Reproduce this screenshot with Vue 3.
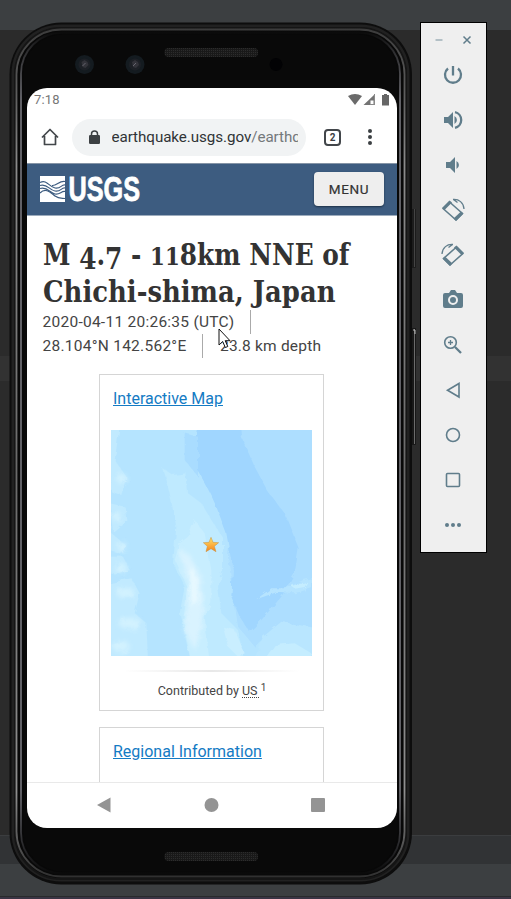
<script setup>
const tools = ['power', 'loud', 'quiet', 'rotl', 'rotr', 'camera', 'zoom', 'back', 'home', 'square', 'more']
</script>

<template>
  <div class="desktop">
    <main class="phone">
      <svg class="frame" width="412" height="864" viewBox="0 0 412 864">
        <defs>
          <linearGradient id="edge" x1="0" y1="0" x2="0" y2="1">
            <stop offset="0" stop-color="#3c3c3c" /><stop offset=".08" stop-color="#606060" />
            <stop offset=".16" stop-color="#8b8b8b" /><stop offset=".52" stop-color="#6a6a6a" />
            <stop offset=".9" stop-color="#8f8f8f" /><stop offset="1" stop-color="#303030" />
          </linearGradient>
          <linearGradient id="edge2" x1="0" y1="0" x2="0" y2="1">
            <stop offset="0" stop-color="#0b0b0b" /><stop offset=".02" stop-color="#2a2a2c" />
            <stop offset=".08" stop-color="#6a6a70" /><stop offset=".9" stop-color="#6a6a70" />
            <stop offset=".98" stop-color="#1c1c1e" /><stop offset="1" stop-color="#0a0a0a" />
          </linearGradient>
          <pattern id="mesh" width="2" height="2" patternUnits="userSpaceOnUse">
            <rect width="2" height="2" fill="#191919" /><rect width="1" height="1" fill="#2c2c2c" />
          </pattern>
        </defs>
        <rect x="401" y="187" width="6" height="59" rx="1" fill="#1c1c1c" />
        <path d="M405.5 187v58" stroke="#444" />
        <rect x="401" y="306" width="6" height="117" rx="1" fill="#181818" />
        <path d="M405.5 307v115" stroke="#6b6b6b" />
        <path d="M404 308h2v4" stroke="#bbb" fill="none" />
        <rect x=".5" y=".5" width="402.5" height="862" rx="52" fill="#0d0d0d" />
        <rect x="4" y="4" width="395" height="854" rx="48" fill="none" stroke="#212121" stroke-width="3" />
        <rect x="6" y="6" width="391" height="851" rx="46" fill="#080808" stroke="#151515" stroke-width="2" />
        <rect x="7.5" y="7.5" width="388" height="847" rx="45" fill="none" stroke="url(#edge)" stroke-width="1.8" />
        <rect x="12" y="10.5" width="379" height="841" rx="41" fill="#080808" stroke="url(#edge2)" stroke-width="1.8" />
        <rect x="14.5" y="12.5" width="374" height="837" rx="39" fill="#090909" />
        <g v-for="x in [75.5, 126]" :key="x">
          <circle :cx="x" cy="42.5" r="9.5" fill="#141b20" />
          <circle :cx="x" cy="42.5" r="6" fill="#1d2026" />
          <path :d="`M${x - 3} 40l3-2 3 2 1 3-3 3-3-1z`" fill="#33333a" />
          <path :d="`M${x - 2} 44l3-3`" stroke="#66656f" />
        </g>
        <circle cx="267" cy="42.5" r="6.5" fill="#020204" />
        <rect x="155.5" y="26" width="93.5" height="9" rx="4" fill="url(#mesh)" />
        <rect x="155.5" y="830" width="93.5" height="9" rx="4" fill="url(#mesh)" />
      </svg>

      <div class="screen">
        <div class="status">
          <span>7:18</span>
          <svg width="43" height="14" viewBox="0 0 43 14">
            <path d="M0 3Q7 -1 14 3L7 12z" fill="#6a6a6a" />
            <path d="M27 1v11H15.5z" fill="#737373" /><path d="M22.5 7.5h3V11h-3z" fill="#fff" /><path d="M26.5 1v11M22 11.5h5" stroke="#8a8a8a" />
            <path d="M34 2h2V1h3v1h2v10.5h-7z" fill="#666" />
          </svg>
        </div>
        <div class="browser">
          <svg class="home" width="18" height="18" viewBox="0 0 18 18"><path d="M1 9.5L9 1.5l8 8M3.5 8v8.5h11V8" fill="none" stroke="#42464a" stroke-width="1.7" stroke-linejoin="round" /></svg>
          <div class="url">
            <svg width="11" height="14" viewBox="0 0 11 14"><rect y="5" width="11" height="9" rx="1.2" fill="#3c4043" /><path d="M2.5 5.5V4a3 3 0 016 0v1.5" fill="none" stroke="#3c4043" stroke-width="1.5" /></svg>
            <span>earthquake.usgs.gov<i>/earthq</i></span>
          </div>
          <div class="tabs">2</div>
          <svg class="dots" width="6" height="16" viewBox="0 0 6 16" fill="#3c4043"><circle cx="3" cy="2" r="2" /><circle cx="3" cy="8" r="2" /><circle cx="3" cy="14" r="2" /></svg>
        </div>
        <header>
          <svg class="brand" width="101" height="28" viewBox="0 0 101 28">
            <rect y="1" width="25" height="26" fill="#fff" />
            <g fill="none" stroke="#3d5c80" stroke-width="1.2">
              <path d="M0 7.5C7 4 9 12 15 13S21 9.5 25 10" />
              <path d="M0 10.5C7 8 9 15 15 16S21 12.5 25 13" />
              <path d="M0 13.5C7 11 10 18 15 19S21 16 25 16.5" />
              <path d="M12 10.5C17 11 19 5.5 25 6.5" />
              <path d="M0 18C6 12 11 18 15 21S22 23 25 23.5" />
            </g>
            <text x="28.5" y="26" textLength="71.5" lengthAdjust="spacingAndGlyphs" class="logo">USGS</text>
          </svg>
          <button>MENU</button>
        </header>
        <section class="content">
          <h1>
            <svg width="320" height="71" viewBox="0 0 320 71">
              <text x="0" y="25" textLength="306.5" lengthAdjust="spacingAndGlyphs">M <tspan dy="3.5">4</tspan><tspan dy="-3.5">.</tspan><tspan dy="3.5">7</tspan><tspan dy="-3.5"> - </tspan><tspan class="low">11</tspan>8km NNE of</text>
              <text x="0" y="62" textLength="292.5" lengthAdjust="spacingAndGlyphs">Chichi-shima, Japan</text>
            </svg>
          </h1>
          <div class="facts"><span class="time">2020-04-11 20:26:35 (UTC)</span><b></b></div>
          <div class="facts second"><span class="place">28.104°N 142.562°E</span><b></b><span class="depth">23.8 km depth</span></div>
          <article class="card first">
            <a class="a1">Interactive Map</a>
            <svg class="map" width="201" height="226" viewBox="49 180 603 678">
              <defs>
                <filter id="soft"><feTurbulence type="fractalNoise" baseFrequency=".045" numOctaves="3" seed="4" /><feDisplacementMap in="SourceGraphic" scale="16" /><feGaussianBlur stdDeviation="2" /></filter>
                <filter id="haze"><feGaussianBlur stdDeviation="6" /></filter>
                <linearGradient id="gold" x1="0" y1="0" x2="0" y2="1"><stop stop-color="#ffe56a" /><stop offset="1" stop-color="#f7821b" /></linearGradient>
              </defs>
              <rect x="49" y="180" width="603" height="678" fill="#b5e4ff" />
              <g filter="url(#soft)">
                <path d="M435 160H680V780L600 765 520 790 480 830 430 770 400 560z" fill="#addeff" />
                <path d="M310 160L290 270Q340 350 365 410L395 490 415 600 410 680 435 740 465 785 500 750 560 680 600 610 612 535 570 430 520 365 480 290 440 200 435 160z" fill="#a0d6ff" />
                <path d="M270 190L310 200V320L270 270z" fill="#a9dcff" />
                <path d="M203 295L235 315 275 310 280 370 320 400 350 450 385 505 385 600 370 650 380 730 430 780 450 880H290L255 730 270 650 235 580 245 470 225 370z" fill="#bfeaff" />
                <path d="M300 450L330 490 350 600 350 700 330 740 345 880H290L265 750 280 660 240 570 255 520 280 500z" fill="#c8eeff" />
                <g filter="url(#haze)">
                  <path d="M250 535L285 555 320 620 325 710 320 780 300 840 270 780 285 650z" fill="#d9f3ff" />
                  <path d="M285 585L305 610 310 690 290 710z" fill="#e8f9ff" />
                </g>
                <path d="M385 770L420 780 450 850 430 860 400 830z" fill="#c9eeff" />
                <path d="M485 688L530 655 575 655 625 630 652 625V655L600 670 550 665z" fill="#b6e4ff" />
                <path d="M590 648L638 635 630 651 600 656z" fill="#c5edff" />
                <path d="M480 880L505 800 560 755 670 775V880z" fill="#b9e6ff" />
                <path d="M515 860L540 825 600 820 650 850V870z" fill="#c5edff" />
                <path d="M30 170H75L60 270 95 320 80 375 50 365zM45 400L90 410 95 450 55 485zM45 485L75 510 98 530 75 550 45 540zM45 560L85 560 105 600 70 615 45 610zM45 640L110 625 135 670 120 730 155 760 160 870H45z" fill="#c1eaff" />
                <g fill="#d2f2ff" filter="url(#haze)"><circle cx="67" cy="440" r="12" /><circle cx="82" cy="530" r="13" /><circle cx="79" cy="595" r="15" /><ellipse cx="92" cy="668" rx="28" ry="14" /><ellipse cx="105" cy="760" rx="34" ry="17" /><ellipse cx="80" cy="830" rx="25" ry="18" /><ellipse cx="80" cy="325" rx="15" ry="13" /></g>
              </g>
              <path d="M349 502l6 15 17 1-13 11 5 16-15-9-15 9 4-16-12-11 17-1z" fill="url(#gold)" stroke="#c4903e" stroke-width="1.5" />
            </svg>
            <hr />
            <p>Contributed by <u>US </u><sup>1</sup></p>
          </article>
          <article class="card"><a class="a2">Regional Information</a></article>
        </section>
        <nav>
          <svg width="370" height="44" viewBox="0 0 370 44" fill="#949494"><path d="M70 22L83.5 14.5v15z" /><circle cx="184.5" cy="22" r="7" /><rect x="284" y="15" width="14" height="14" rx="1" /></svg>
        </nav>
      </div>
    </main>

    <aside>
      <svg class="win" width="65" height="34" viewBox="0 0 65 34"><path d="M14.5 17h7" stroke="#9fb0b8" stroke-width="1.5" /><path d="M42.5 13.5l7 7m0-7l-7 7" stroke="#607d8b" stroke-width="1.5" /></svg>
      <svg v-for="t in tools" :key="t" width="24" height="24" viewBox="0 0 24 24" class="tool">
        <path v-if="t === 'power'" class="line thick" d="M12 3v9.5M7 5.5a8 8 0 1010 0" />
        <g v-else-if="t === 'loud'"><path d="M3 9h4l5-5v16l-5-5H3zM13.5 8a4.5 4.5 0 010 8z" /><path class="line thick" d="M14 4.2a8 8 0 010 15.6" /></g>
        <path v-else-if="t === 'quiet'" d="M5 9h4l5-5v16l-5-5H5zM15.5 8a4.5 4.5 0 010 8z" />
        <g v-else-if="t === 'rotl' || t === 'rotr'" :transform="t === 'rotr' ? 'matrix(-1 0 0 1 24 0)' : ''">
          <path class="line mid" d="M2 10.5L8.5 4 21.5 15.5 15 22z" stroke-linejoin="round" />
          <path d="M1 10l7.5-7.5 2.5 2L3.5 12zM12.5 20.5l7.5-7 2.5 2-7.5 7.5z" />
          <path class="line thin" d="M12 1.5c6-.5 10.5 3 11 9.5M12.5 1.5l4 3" />
        </g>
        <path v-else-if="t === 'camera'" fill-rule="evenodd" d="M4 5h4l2-3h4l2 3h4a2 2 0 012 2v11a2 2 0 01-2 2H4a2 2 0 01-2-2V7a2 2 0 012-2m8 2a5 5 0 100 10 5 5 0 000-10m0 2a3 3 0 110 6 3 3 0 010-6" />
        <g v-else-if="t === 'zoom'"><circle class="line mid" cx="9.5" cy="9.5" r="5.8" /><path class="line thick" d="M14 14l6 6" /><path class="line thin" d="M9.5 7v5M7 9.5h5" /></g>
        <path v-else-if="t === 'back'" class="line mid" d="M18 5.5v13.5L6.5 12.2z" />
        <circle v-else-if="t === 'home'" class="line mid" cx="12" cy="12" r="6.5" />
        <rect v-else-if="t === 'square'" class="line mid" x="5.5" y="5.5" width="13" height="13" rx="1" />
        <g v-else><circle cx="6" cy="12" r="2" /><circle cx="12" cy="12" r="2" /><circle cx="18" cy="12" r="2" /></g>
      </svg>
    </aside>
    <svg class="cursor" width="14" height="21" viewBox="0 0 14 21"><path d="M1 1v16l3.7-3.5 2.6 6 2.5-1-2.6-5.8H12z" fill="#fff" stroke="#111" stroke-width="1" /></svg>
  </div>
</template>

<style>
body { background: #2b2b2b; }
</style>

<style scoped>
* { box-sizing: border-box; }
.desktop { position: relative; display: flex; align-items: flex-start; width: 511px; height: 899px; padding: 22px 0 0 9px; overflow: hidden; font-family: Roboto, sans-serif; background: linear-gradient(#3c3f41 0 30px, #2b2b2b 30px 356px, #323232 356px 381px, #2b2b2b 381px 835px, #3b3d3f 835px 836px, #313335 836px 864px, #3c3f41 864px 896px, #292b2c 896px 897px, #3a3544 897px); }
.phone { position: relative; width: 411px; height: 864px; padding: 66px 0 0 18px; flex: none; }
.frame { position: absolute; left: 0; top: 0; }
.screen { position: relative; display: flex; flex-direction: column; width: 370px; height: 740px; background: #fff; border-radius: 20px; overflow: hidden; }
.status { display: flex; justify-content: space-between; height: 23px; padding: 5px 6px 0 7px; font-size: 13px; line-height: 14px; letter-spacing: .2px; color: #777; flex: none; }
.browser { display: flex; align-items: center; height: 52px; padding: 0 0 0 13.5px; flex: none; }
.browser > * { flex: none; }
.url { display: flex; align-items: center; width: 234px; height: 37px; margin-left: 13.5px; padding: 0 8px 0 17px; border-radius: 19px; background: #f1f3f4; }
.url svg { flex: none; }
.url span { flex: none; margin-left: 11.5px; width: 186px; overflow: hidden; white-space: nowrap; font-size: 15.2px; letter-spacing: -.07px; line-height: 22px; color: #303336; }
.url i { font-style: normal; color: #74787b; }
.tabs { width: 17px; height: 17px; margin-left: 18px; border: 2px solid #42464a; border-radius: 4px; text-align: center; font: bold 10px/13px Roboto, sans-serif; color: #3c4043; }
.dots { margin-left: 26px; }
header { display: flex; justify-content: space-between; align-items: center; height: 52.5px; padding: 0 13px; background: #3d5c80; border-top: 1px solid #8594a6; border-bottom: 1px solid #9dacbd; flex: none; }
.brand { overflow: visible; }
.logo { font: bold 35px "Liberation Sans", sans-serif; fill: #fff; stroke: #fff; stroke-width: .8px; }
button { width: 70px; height: 34px; border: 0; padding: 0; border-radius: 4px; background: #eee; color: #333; font: 400 13.5px Roboto, sans-serif; letter-spacing: .7px; -webkit-text-stroke: .2px #333; box-shadow: 0 1px 2px #1d3147; }
.content { flex: 1; min-height: 0; overflow: hidden; padding: 24px 0 0 15.5px; }
h1 { margin: 0; height: 70px; }
h1 svg { display: block; overflow: visible; }
h1 text { font: bold 29px "DejaVu Serif", serif; fill: #333; }
.low { font-size: 25px; }
.facts { display: flex; align-items: center; height: 24px; font-size: 15.5px; color: #444; white-space: nowrap; }
.facts b { width: 1px; height: 24px; margin-left: 16px; background: #aaa; }
.time, .place { letter-spacing: .26px; }
.depth { margin-left: 16.5px; letter-spacing: .2px; }
.card { width: 225px; height: 337px; margin: 15.5px 0 0 57px; padding: 14px 11px; border: 1.5px solid #d5d5d5; background: #fff; }
.card.first { margin-top: 16.5px; }
.card { margin-left: 56.5px; }
.card a { display: block; padding-left: 2px; font-size: 16px; line-height: 20px; color: #147bc4; text-decoration: underline; white-space: nowrap; }
.map { display: block; margin-top: 21px; }
hr { width: 176px; height: 2px; margin: 14px auto 0; border: 0; background: linear-gradient(90deg, #fff, #e8e8e8 50%, #fff); }
p { margin: 10px 0 0 1px; text-align: center; font-size: 12.5px; line-height: 18px; color: #444; }
u { text-decoration: underline dotted 1px; text-underline-offset: 2px; white-space: pre; }
sup { font-size: 10px; line-height: 0; vertical-align: 4px; }
nav { height: 46px; border-top: 1.5px solid #e9e9e9; flex: none; }
aside { width: 67px; height: 531px; flex: none; border: 1px solid #000; background: #efefef; display: flex; flex-direction: column; align-items: center; }
.win { flex: none; }
.tool { flex: none; margin: 6px 2px 15px 0; fill: #607d8b; overflow: visible; }
.line { fill: none; stroke: #607d8b; stroke-width: 2; }
.thick { stroke-width: 2.3; }
.mid { stroke-width: 1.6; }
.thin { stroke-width: 1.3; }
.cursor { position: absolute; left: 218px; top: 328px; }
</style>
